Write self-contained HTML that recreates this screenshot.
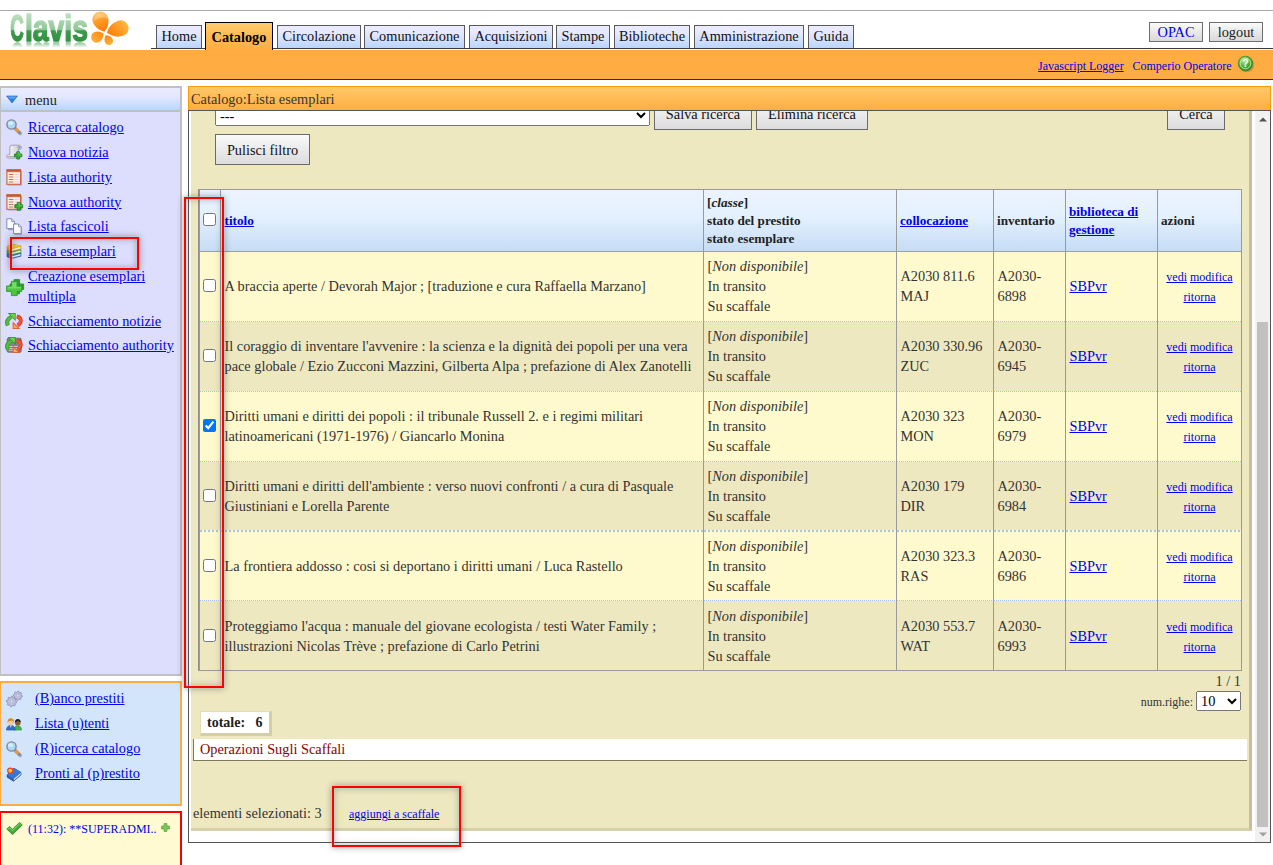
<!DOCTYPE html>
<html lang="it">
<head>
<meta charset="utf-8">
<title>Clavis - Catalogo: Lista esemplari</title>
<style>
html,body{margin:0;padding:0;background:#fff;}
body{width:1273px;height:865px;overflow:hidden;position:relative;font-family:"Liberation Serif","Times New Roman",serif;font-size:14.32px;color:#000;}
a{color:#0000ee;text-decoration:underline;}
.abs{position:absolute;}
#topline{left:0;top:10px;width:1273px;height:1px;background:#a9a9a9;}
#logo{left:8px;top:11px;width:126px;height:38px;}
#logotxt{left:8px;top:11px;width:90px;height:30.6px;overflow:hidden;-webkit-box-reflect:below 0px linear-gradient(transparent 82%,rgba(0,0,0,.62) 100%);}
#tabline{left:151px;top:48px;width:1122px;height:1px;background:#3c3c3c;}
.tab{position:absolute;top:25px;height:23px;box-sizing:border-box;border:1px solid #5a5a5a;border-bottom:none;background:linear-gradient(#ececff,#e4e8ff 35%,#b9d5ff);padding:0;text-align:center;line-height:21px;color:#111;white-space:nowrap;}
.tab.on{top:22px;height:28px;border:1px solid #000;border-bottom:none;background:linear-gradient(#ffca6a,#ffad42);font-weight:bold;line-height:28px;color:#000;}
.tbtn{position:absolute;top:22px;height:20px;box-sizing:border-box;border:1px solid #6e6e6e;background:linear-gradient(#fbfbfb,#e9e9e9 50%,#d9d9d9);text-align:center;line-height:18px;white-space:nowrap;}
#obar{left:0;top:50px;width:1273px;height:29px;background:#ffad42;border-bottom:1px solid #2e2e2e;}
#obar a,#obar span{position:absolute;font-size:12px;white-space:nowrap;line-height:14px;}
#menu{left:-1px;top:86px;width:183px;height:590px;box-sizing:border-box;border:2px solid #c0c0c0;background:#ddddfd;}
#menuhd{left:0;top:0;width:179px;height:22px;background:linear-gradient(#ebebff,#e4e8ff 40%,#b8d6ff);border-bottom:2px solid #c0c0c0;}
#menuhd span{position:absolute;left:24px;top:4px;line-height:17px;color:#222;}
.mi{position:absolute;left:0;width:179px;height:20px;line-height:19.8px;white-space:nowrap;}
.mi a{position:absolute;left:27px;top:0;}
.mi svg{position:absolute;left:5px;top:2px;width:16px;height:16px;overflow:visible;}
#menu .mi svg{top:1px;}
#menu .mi.h2 svg{top:12px;width:18px;height:17px;}
#quick{left:-1px;top:681px;width:183px;height:125px;box-sizing:border-box;border:2px solid #ffad42;background:#d2e5fb;}
#quick .mi a{left:34px;}
#notes{left:-1px;top:811px;width:183px;height:60px;box-sizing:border-box;border:2px solid #ff0000;background:#fffad2;}
#chd{left:188px;top:86px;width:1083px;height:24px;box-sizing:border-box;border:1px solid #ff9a0a;border-bottom:none;background:linear-gradient(#ffc968,#ffad42);color:#363636;line-height:24px;}
#frame{left:188px;top:110px;width:1083px;height:733px;box-sizing:border-box;border:1px solid #555;background:#fff;overflow:hidden;}
#page{left:2px;top:0;width:1061px;height:720px;box-sizing:border-box;background:#eee8c1;border-right:3px solid #c5c09b;border-bottom:3px solid #d6d1aa;}
#sbar{left:1066px;top:0;width:15px;height:731px;background:#f1f1f1;}
#thumb{left:2px;top:211px;width:11px;height:505px;background:#c1c1c1;}
.btn{position:absolute;box-sizing:border-box;border:1px solid #6b6b6b;background:linear-gradient(#fafafa,#ececec 45%,#dcdcdc);text-align:center;white-space:nowrap;color:#111;height:31px;line-height:30px;}
.hl{position:absolute;box-sizing:border-box;border:2px solid #ff0000;box-shadow:0 0 0 1px rgba(170,235,235,.28),inset 0 0 0 1px rgba(170,235,235,.28),0 0 7px rgba(0,0,0,.38),inset 0 0 7px rgba(0,0,0,.30);pointer-events:none;}
select{font-family:"Liberation Serif",serif;font-size:14.4px;margin:0;}
#sel1{left:24px;top:-6px;width:435px;height:21px;}
#sel2{left:1005px;top:580px;width:45px;height:20px;}
#grid{left:7px;top:78px;width:1044px;table-layout:fixed;border-collapse:separate;border-spacing:0;border:none;border-left:1px solid #8e8e8e;border-right:1px solid #9a9a9a;border-bottom:1px solid #9a9a9a;}
#grid th{height:62px;box-sizing:border-box;padding:0 3px;border:none;border-top:1px solid #9a9a9a;border-left:1px solid #9a9a9a;background:linear-gradient(#ecf4fe,#e3f0fe 45%,#c6dcf4);font-size:13.2px;line-height:18px;text-align:left;color:#222;font-weight:bold;}
#grid td{height:70px;box-sizing:border-box;padding:4px 3px 0 3.5px;border:none;border-left:1px solid #9a9a9a;line-height:19.8px;color:#333;vertical-align:middle;}
#grid tbody tr:first-child td{height:69px;padding-top:2px;border-top:1px solid #9e9e9e;}
#grid tr.odd td{background-color:#fffacd;}
#grid tr.even td{background-color:#eee8c1;}
#grid tr.r2 td,#grid tr.r4 td{background-image:repeating-linear-gradient(90deg,#a4c4ee 0 1px,#fffacd 1px 2px),linear-gradient(#fffacd,#fffacd);background-size:100% 1px,100% 1px;background-position:0 1px,0 0;background-repeat:no-repeat;}
#grid tr.r3 td{background-image:repeating-linear-gradient(90deg,#a4c4ee 0 1px,#fffacd 1px 2px),linear-gradient(#eee8c1,#eee8c1);background-size:100% 1px,100% 1px;background-position:0 1px,0 0;background-repeat:no-repeat;}
#grid tr.r5 td{background-image:repeating-linear-gradient(90deg,#a4c4ee 0 2px,#fffacd 2px 4px);background-size:100% 2px;background-position:0 0;background-repeat:no-repeat;}
#grid tr.r6 td{background-image:repeating-linear-gradient(90deg,#a4c4ee 0 1px,#fffacd 1px 2px);background-size:100% 1px;background-position:0 0;background-repeat:no-repeat;}
#grid .ck{padding:0;text-align:left;}
#grid th.t1{padding-left:3.5px;}
#grid td.ck{padding:2px 0 0 0;}
#grid tbody tr:first-child td.ck{padding:0;}
#grid input{margin:0 0 0 3px;width:13px;height:13px;vertical-align:middle;position:relative;top:-1px;}
#grid th input{top:-2px;}
#grid td.az{font-size:12px;text-align:center;padding:6px 2px 0 2px;}
#grid tbody tr:first-child td.az{padding-top:4px;}
#tot{left:9px;top:600px;width:72px;height:25px;box-sizing:border-box;background:#fff;border-style:solid;border-width:1px 3px 3px 1px;border-color:#e4dfb8 #d3cea6 #d3cea6 #e4dfb8;font-size:14px;line-height:22px;padding-left:6px;color:#222;white-space:nowrap;}
#ops{left:2px;top:628px;width:1054px;height:22px;box-sizing:border-box;background:#fff;border-left:1px solid #7d7a5e;border-bottom:1px solid #7d7a5e;padding-left:6px;line-height:20px;color:#8b0000;}
</style>
</head>
<body>
<div id="topline" class="abs"></div>

<!-- LOGO -->
<div id="logotxt" class="abs">
<svg viewBox="0 0 90 31" width="90" height="31" style="display:block">
<defs>
<linearGradient id="lg" gradientUnits="userSpaceOnUse" x1="0" y1="3" x2="0" y2="31"><stop offset="0" stop-color="#bfe0c2"/><stop offset=".56" stop-color="#8ec796"/><stop offset=".6" stop-color="#3f9a4c"/><stop offset="1" stop-color="#2f9040"/></linearGradient>
</defs>
<text y="30" font-family="Liberation Sans, Arial, sans-serif" font-weight="bold" font-size="36" fill="url(#lg)" stroke="url(#lg)" stroke-width="1.500" stroke-linejoin="round"><tspan x="2.200" textLength="13.500" lengthAdjust="spacingAndGlyphs">C</tspan><tspan x="17" textLength="63" lengthAdjust="spacingAndGlyphs">lavis</tspan></text>
</svg>
</div>
<svg id="logo" class="abs" viewBox="0 0 126 38">
<defs>
<linearGradient id="og1" x1=".3" y1="0" x2=".7" y2="1"><stop offset="0" stop-color="#ffc468"/><stop offset=".45" stop-color="#ff9a22"/><stop offset="1" stop-color="#ff7a05"/></linearGradient>
<linearGradient id="og2" x1="1" y1=".2" x2="0" y2=".8"><stop offset="0" stop-color="#ffbe4a"/><stop offset=".5" stop-color="#ff9a22"/><stop offset="1" stop-color="#ff7a05"/></linearGradient>
<linearGradient id="og3" x1="0" y1="1" x2="1" y2="0"><stop offset="0" stop-color="#ffb63e"/><stop offset="1" stop-color="#ff8410"/></linearGradient>
<linearGradient id="og4" x1=".6" y1="1" x2=".3" y2="0"><stop offset="0" stop-color="#ffb63e"/><stop offset="1" stop-color="#ff8410"/></linearGradient>
</defs>
<path d="M96.40 20.80Q102.33 13.65 99.79 6.08A7.9 7.9 0 1 0 84.81 11.12Q87.35 18.68 96.40 20.80Z" fill="url(#og1)"/>
<path d="M98.80 21.60Q106.39 27.51 114.95 24.84A7.9 7.9 0 1 0 110.25 9.76Q101.69 12.42 98.80 21.60Z" fill="url(#og2)"/>
<path d="M95.50 22.60Q90.33 19.09 86.06 21.32A5.5 5.5 0 1 0 91.14 31.08Q95.42 28.84 95.50 22.60Z" fill="url(#og3)"/>
<path d="M97.70 24.30Q95.36 28.46 97.34 31.93A4.1 4.1 0 1 0 104.46 27.87Q102.48 24.39 97.70 24.30Z" fill="url(#og4)"/>
<path d="M86.500 9.500Q86 3 92 1.800Q98.500 1.500 99.800 8Q93 4.500 86.500 9.500Z" fill="#fff" opacity=".28"/>
</svg>

<!-- TABS -->
<div id="tabline" class="abs"></div>
<div class="tab" style="left:156px;width:46px;">Home</div>
<div class="tab on" style="left:205px;width:68px;">Catalogo</div>
<div class="tab" style="left:277px;width:84px;">Circolazione</div>
<div class="tab" style="left:364px;width:101px;">Comunicazione</div>
<div class="tab" style="left:469px;width:84px;">Acquisizioni</div>
<div class="tab" style="left:556px;width:54px;">Stampe</div>
<div class="tab" style="left:614px;width:76px;">Biblioteche</div>
<div class="tab" style="left:694px;width:110px;">Amministrazione</div>
<div class="tab" style="left:808px;width:46px;">Guida</div>
<div class="tbtn" style="left:1149px;width:54px;color:#0000ee;">OPAC</div>
<div class="tbtn" style="left:1209px;width:54px;color:#222;">logout</div>

<!-- ORANGE BAR -->
<div id="obar" class="abs">
<a href="#" style="left:1038px;top:9px;color:#0000ee;">Javascript Logger</a>
<span style="left:1132.500px;top:9px;color:#0000ee;">Comperio Operatore</span>
<svg style="position:absolute;left:1237px;top:5px;width:18px;height:18px;" viewBox="0 0 18 18"><defs><radialGradient id="hg" cx=".4" cy=".3" r=".75"><stop offset="0" stop-color="#b6ec8e"/><stop offset=".55" stop-color="#48b030"/><stop offset="1" stop-color="#2a7f1e"/></radialGradient></defs><circle cx="9.600" cy="10" r="7.300" fill="#6b5a3a" opacity=".35"/><circle cx="8.500" cy="8.500" r="7.300" fill="url(#hg)" stroke="#3a8a2a" stroke-width=".8"/><circle cx="8.500" cy="8.500" r="5.300" fill="none" stroke="#e8f8d8" stroke-width=".9" opacity=".8"/><text x="8.500" y="12.300" text-anchor="middle" font-family="Liberation Sans, Arial, sans-serif" font-weight="bold" font-size="10.500" fill="#ffffff">?</text></svg>
</div>

<!-- LEFT MENU -->
<div id="menu" class="abs">
<div id="menuhd" class="abs"><svg viewBox="0 0 12 9" style="position:absolute;left:5px;top:7px;width:12px;height:9px;"><path d="M.6 1h10.800L6 8z" fill="#2f7fe0" stroke="#1f5fc0" stroke-width=".6" stroke-linejoin="round"/><path d="M1.800 1.600h8.400L8.800 3.400H3.200z" fill="#7fb4f4" opacity=".7"/></svg><span>menu</span></div>
<div class="mi " style="top:30px"><svg viewBox="0 0 16 16"><path d="M9.700 10.200l4.600 4.400" stroke="#7d7d88" stroke-width="3.400" stroke-linecap="round" opacity=".55"/><path d="M8.600 8.800l4.800 4.700" stroke="#8b8b93" stroke-width="3" stroke-linecap="round"/><path d="M9.200 9.300l3.200 3.100" stroke="#f29a32" stroke-width="2.800"/><path d="M8.300 8.300l1.300 1.300" stroke="#8f949e" stroke-width="2.400"/><circle cx="5.500" cy="5.500" r="4.600" fill="#a9d9f5" stroke="#80889a" stroke-width="1.400"/><ellipse cx="4.600" cy="4.200" rx="2.600" ry="1.900" fill="#d9f0fc" opacity=".85"/></svg><a href="#">Ricerca catalogo</a></div>
<div class="mi " style="top:55px"><svg viewBox="0 0 16 16"><defs><linearGradient id="sg" x1="0" y1="0" x2="1" y2="0"><stop offset="0" stop-color="#fdfdff"/><stop offset="1" stop-color="#c6c6d2"/></linearGradient></defs><path d="M5 1.200h7.600c1.600 0 2.700 1 2.700 2.300 0 1.200-.8 1.900-2 1.900h-.9v5.800c0 1.800-1.200 2.900-2.900 2.900H2.400C1.300 14.100.5 13.400.5 12.400c0-1 .7-1.700 1.700-1.700h1.600V3.300c0-1 .5-1.700 1.200-2.100z" fill="url(#sg)" stroke="#9a9aaa" stroke-width=".9"/><ellipse cx="13" cy="3.300" rx="1.300" ry="1.100" fill="#b4b4c4" stroke="#8e8e9e" stroke-width=".6"/><path d="M1.200 12.600h8.200" stroke="#a8a8b8" stroke-width="1.200"/><path d="M10.800 7.800h2.800v2.200h2.200v2.800h-2.200V15h-2.800v-2.200H8.600V10h2.200z" fill="#35b032" stroke="#1c7d1e" stroke-width=".9" stroke-linejoin="round"/><path d="M11.400 8.600h1.600v2.200h2v.8" fill="none" stroke="#7fe070" stroke-width=".7" opacity=".8"/></svg><a href="#">Nuova notizia</a></div>
<div class="mi " style="top:80px"><svg viewBox="0 0 16 16"><path d="M15.300 2v13.800H2.200" fill="none" stroke="#6e6e7e" stroke-width="1.200" opacity=".5"/><rect x=".9" y=".7" width="13.700" height="14.600" fill="#fbf1ea" stroke="#cc6846" stroke-width="1.200"/><rect x=".9" y=".7" width="13.700" height="2.200" fill="#c9532e"/><rect x="2" y="2.900" width="11.500" height="1" fill="#f3d2c2"/><path d="M2.800 5.500h4.600M2.800 8h4.600M2.800 10.500h4.600M2.800 13h4.600" stroke="#c77455" stroke-width="1.100"/><path d="M8.400 5.500h4.400M8.400 8h4.400M8.400 10.500h4.400M8.400 13h4.400" stroke="#ead0c3" stroke-width="1.100"/></svg><a href="#">Lista authority</a></div>
<div class="mi " style="top:104.5px"><svg viewBox="0 0 16 16"><path d="M15.300 2v13.800H2.200" fill="none" stroke="#6e6e7e" stroke-width="1.200" opacity=".5"/><rect x=".9" y=".7" width="13.700" height="14.600" fill="#fbf1ea" stroke="#cc6846" stroke-width="1.200"/><rect x=".9" y=".7" width="13.700" height="2.200" fill="#c9532e"/><rect x="2" y="2.900" width="11.500" height="1" fill="#f3d2c2"/><path d="M2.800 5.500h4.600M2.800 8h4.600M2.800 10.500h4.600M2.800 13h4.600" stroke="#c77455" stroke-width="1.100"/><path d="M8.400 5.500h4.400M8.400 8h4.400M8.400 10.500h4.400M8.400 13h4.400" stroke="#ead0c3" stroke-width="1.100"/><path d="M11.200 8.400h3v2.400h2.400v3h-2.400v2.400h-3v-2.400H8.800v-3h2.400z" fill="#35b032" stroke="#1c7d1e" stroke-width=".9" stroke-linejoin="round"/><path d="M11.900 9.200h1.600v2.400h2.200v.8" fill="none" stroke="#7fe070" stroke-width=".7" opacity=".8"/></svg><a href="#">Nuova authority</a></div>
<div class="mi " style="top:129px"><svg viewBox="0 0 16 16"><path d="M1.400 1.700h4.800l2.700 2.700v7h-7.500z" fill="#55607a" opacity=".45" transform="translate(.7 .8)"/><path d="M.8 .8h4.900l2.700 2.700v7.100H.8z" fill="#fcfdff" stroke="#7f8ba6" stroke-width="1"/><path d="M5.700.8v2.700h2.700" fill="#d9e1ef" stroke="#7f8ba6" stroke-width=".8"/><path d="M7.600 6.300h4.900l2.700 2.700v7.100H7.600z" fill="#55607a" opacity=".45" transform="translate(.7 .6)"/><path d="M7.600 6h4.900l2.700 2.700v7H7.600z" fill="#fcfdff" stroke="#7f8ba6" stroke-width="1"/><path d="M12.500 6v2.700h2.700" fill="#d9e1ef" stroke="#7f8ba6" stroke-width=".8"/></svg><a href="#">Lista fascicoli</a></div>
<div class="mi " style="top:154px"><svg viewBox="0 0 16 16"><path d="M1 10.500l5-2.500 9 2v3.200l-9.500 2.300L1 13.700z" fill="#3a74c4" stroke="#2a559a" stroke-width=".6"/><path d="M5.800 13.200l8.700-2.200v1.600l-8.700 2.200z" fill="#e9eef5"/><path d="M1 7l5-2.500 9 2v3.200l-9.500 2.300L1 10.200z" fill="#4fae5a" stroke="#2f8540" stroke-width=".6"/><path d="M5.800 9.700l8.700-2.200v1.600l-8.700 2.200z" fill="#eef3ec"/><path d="M1 3.500l5-2.500 9 2v3.200l-9.500 2.300L1 6.700z" fill="#e2b41e" stroke="#b88c12" stroke-width=".6"/><path d="M5.800 6.200l8.700-2.200v1.600l-8.700 2.200z" fill="#f6f1e2"/><path d="M1 3.500l5-2.500 9 2-9.500 2.300z" fill="#efc63a"/></svg><a href="#">Lista esemplari</a></div>
<div class="mi h2" style="top:179px"><svg viewBox="0 0 18 17"><path d="M8 .600h5.600v4.400h4v5.400h-4v4.400H8v-4.400H4V5h4z" fill="#2f9e2a" stroke="#238a22" stroke-width=".8" stroke-linejoin="round"/><path d="M5.400 2.400h5.800v4.600h4.600v5.400h-4.600v4.200H5.400v-4.200H.600V7h4.800z" fill="#4cc640" stroke="#2a9a28" stroke-width=".9" stroke-linejoin="round"/><path d="M6.300 3.300h4v4.600h4.600v1.500H1.500V7.900h4.800z" fill="#86e27a" opacity=".75"/></svg><a href="#">Creazione esemplari<br>multipla</a></div>
<div class="mi " style="top:224px"><svg viewBox="0 0 16 16"><path d="M1.800 12.600C.2 8.600 2 5.400 5.600 3.700" stroke="#2e8f26" stroke-width="4" fill="none"/><path d="M1.700 0h7.900v7.900z" fill="#2e8f26"/><path d="M1.800 12.400C.4 8.600 2.200 5.600 5.700 4" stroke="#4fbf3c" stroke-width="2.600" fill="none"/><path d="M3.400.800h5.400v5.400z" fill="#6fd456"/><path d="M10.800 3.300C15.800 4.600 16.200 9.400 11.600 12.400" stroke="#d8361a" stroke-width="3.800" fill="none"/><path d="M6.700 8.400v7.600h7.600z" fill="#e2511f"/><path d="M10.800 3.300C15.600 4.800 15.800 9.400 11.600 12.200" stroke="#f4562a" stroke-width="2.400" fill="none"/><path d="M7.500 10.400v4.800h4.800z" fill="#ffa25a"/></svg><a href="#">Schiacciamento notizie</a></div>
<div class="mi " style="top:248px"><svg viewBox="0 0 16 16"><rect x="1.200" y="1.200" width="14" height="14" rx="1" fill="#858585" stroke="#666" stroke-width=".8"/><path d="M3 9.500h10M3 11.500h10M3 13.300h10" stroke="#cfcfcf" stroke-width=".9"/><path d="M1.800 12.600C.2 8.600 2 5.400 5.600 3.700" stroke="#2e8f26" stroke-width="4" fill="none"/><path d="M1.700 0h7.900v7.900z" fill="#2e8f26"/><path d="M1.800 12.400C.4 8.600 2.200 5.600 5.700 4" stroke="#4fbf3c" stroke-width="2.600" fill="none"/><path d="M3.400.800h5.400v5.400z" fill="#6fd456"/><path d="M10.800 3.300C15.800 4.600 16.200 9.400 11.600 12.400" stroke="#d8361a" stroke-width="3.800" fill="none"/><path d="M6.700 8.400v7.600h7.600z" fill="#e2511f"/><path d="M10.800 3.300C15.600 4.800 15.800 9.400 11.600 12.200" stroke="#f4562a" stroke-width="2.400" fill="none"/><path d="M7.500 10.400v4.800h4.800z" fill="#ffa25a"/></svg><a href="#">Schiacciamento authority</a></div>
</div>
<div id="quick" class="abs">
<div class="mi" style="top:6px"><svg viewBox="0 0 16 16"><polygon points="16.40,4.80 16.31,5.70 14.94,6.10 14.63,6.69 15.05,8.05 14.36,8.62 13.10,7.94 12.46,8.14 11.80,9.40 10.90,9.31 10.50,7.94 9.91,7.63 8.55,8.05 7.98,7.36 8.66,6.10 8.46,5.46 7.20,4.80 7.29,3.90 8.66,3.50 8.97,2.91 8.55,1.55 9.24,0.98 10.50,1.66 11.14,1.46 11.80,0.20 12.70,0.29 13.10,1.66 13.69,1.97 15.05,1.55 15.62,2.24 14.94,3.50 15.14,4.14" fill="#c4c4e2" stroke="#8c8cba" stroke-width=".9" stroke-linejoin="round"/><circle cx="11.8" cy="4.8" r="1.38" fill="#d2e5fb" stroke="#9c9cc4" stroke-width=".6"/><polygon points="10.80,10.60 10.70,11.61 9.16,12.07 8.80,12.74 9.28,14.28 8.49,14.92 7.07,14.16 6.35,14.37 5.60,15.80 4.59,15.70 4.13,14.16 3.46,13.80 1.92,14.28 1.28,13.49 2.04,12.07 1.83,11.35 0.40,10.60 0.50,9.59 2.04,9.13 2.40,8.46 1.92,6.92 2.71,6.28 4.13,7.04 4.85,6.83 5.60,5.40 6.61,5.50 7.07,7.04 7.74,7.40 9.28,6.92 9.92,7.71 9.16,9.13 9.37,9.85" fill="#c4c4e2" stroke="#8c8cba" stroke-width=".9" stroke-linejoin="round"/><circle cx="5.6" cy="10.6" r="1.56" fill="#d2e5fb" stroke="#9c9cc4" stroke-width=".6"/></svg><a href="#">(B)anco prestiti</a></div>
<div class="mi" style="top:31.4px"><svg viewBox="0 0 17 14"><path d="M8.500 13.500c0-3 1.600-4.600 4-4.600s4 1.600 4 4.600z" fill="#3fb548" stroke="#2a8f35" stroke-width=".6"/><circle cx="12.500" cy="5.600" r="3" fill="#8a5a32"/><path d="M9.400 5.200c0-2.300 1.400-3.600 3.100-3.600s3.100 1.300 3.100 3.400c-1.400-.3-2-1-2.500-1.800-.8.900-2 1.600-3.700 2z" fill="#1e1a18"/><path d="M.5 13.500c0-3.300 1.800-5 4.600-5s4.600 1.700 4.600 5z" fill="#2f6fc8" stroke="#1f4f9a" stroke-width=".6"/><path d="M4.200 8.700l.9 2.400.9-2.400z" fill="#f3f3f3"/><circle cx="5.100" cy="5.300" r="3" fill="#f5c9a0"/><path d="M1.700 6.200C1.200 3 2.800 1 5.100 1s3.900 2 3.400 5.200c-.4-1.400-1-2.300-1.700-2.900-1.200.5-2.700.6-3.700.4-.6.600-1.100 1.400-1.400 2.500z" fill="#d98a1c"/></svg><a href="#">Lista (u)tenti</a></div>
<div class="mi" style="top:56.3px"><svg viewBox="0 0 16 16"><path d="M9.700 10.200l4.600 4.400" stroke="#7d7d88" stroke-width="3.400" stroke-linecap="round" opacity=".55"/><path d="M8.600 8.800l4.800 4.700" stroke="#8b8b93" stroke-width="3" stroke-linecap="round"/><path d="M9.200 9.300l3.200 3.100" stroke="#f29a32" stroke-width="2.800"/><path d="M8.300 8.300l1.300 1.300" stroke="#8f949e" stroke-width="2.400"/><circle cx="5.500" cy="5.500" r="4.600" fill="#a9d9f5" stroke="#80889a" stroke-width="1.400"/><ellipse cx="4.600" cy="4.200" rx="2.600" ry="1.900" fill="#d9f0fc" opacity=".85"/></svg><a href="#">(R)icerca catalogo</a></div>
<div class="mi" style="top:81.2px"><svg viewBox="0 0 16 16"><path d="M1.200 8.800L8 2.200l7 4.200v2.400l-7.400 6.400-6.400-4z" fill="#2a62c4" stroke="#1b4290" stroke-width=".7" stroke-linejoin="round"/><path d="M7.800 12.700l6.800-5.900v1.700l-6.800 5.900z" fill="#e8ecf4"/><path d="M1.200 8.800L8 2.200l7 4.200-7.300 6.400z" fill="#3a78d8"/><circle cx="4.300" cy="4.600" r="3.200" fill="#e8442a"/><circle cx="4.300" cy="4.600" r="1.900" fill="#ffc92a"/></svg><a href="#">Pronti al (p)restito</a></div>
</div>
<div id="notes" class="abs">
<svg style="position:absolute;left:5px;top:9px;width:17px;height:13px;" viewBox="0 0 17 13"><path d="M1.400 7.800l2.700-2.500 2.600 2.700L14 1.200l2.400 2.300L6.800 12.900z" fill="#3c5f2c" opacity=".45"/><path d="M.800 7l2.700-2.600 2.900 2.900L13.600.400l2.600 2.400L6.400 12.400z" fill="#3fae36" stroke="#2c8c28" stroke-width=".8" stroke-linejoin="round"/><path d="M2.200 7l1.300-1.200 2.900 2.900 7.200-6.900 1.100 1" fill="none" stroke="#86d874" stroke-width="1"/></svg>
<span style="position:absolute;left:27px;top:9px;font-size:12px;line-height:14px;color:#0000ee;white-space:nowrap;">(11:32): **SUPERADMI..</span>
<svg style="position:absolute;left:159.500px;top:9.500px;width:9px;height:9px;" viewBox="0 0 10 10"><path d="M3.400.6h3.200v2.800h2.800v3.200H6.600v2.800H3.400V6.600H.6V3.400h2.800z" fill="#7cc65a" stroke="#5aa640" stroke-width=".8" stroke-linejoin="round"/></svg>
</div>

<!-- CONTENT -->
<div id="chd" class="abs"><span style="padding-left:2px;">Catalogo:Lista esemplari</span></div>
<div id="frame" class="abs">
<div id="page" class="abs">
<select id="sel1" class="abs"><option>---</option></select>
<div class="btn" style="left:463px;top:-12px;width:98px;line-height:28px;">Salva ricerca</div>
<div class="btn" style="left:565px;top:-12px;width:112px;line-height:28px;">Elimina ricerca</div>
<div class="btn" style="left:976px;top:-12px;width:58px;line-height:28px;">Cerca</div>
<div class="btn" style="left:24px;top:23px;width:95px;">Pulisci filtro</div>

<table id="grid" class="abs" cellspacing="0">
<colgroup><col style="width:21px"><col style="width:483px"><col style="width:193px"><col style="width:97px"><col style="width:72px"><col style="width:92px"><col style="width:84px"></colgroup>
<thead><tr><th class="ck"><input type="checkbox"></th><th class="t1"><a href="#">titolo</a></th><th>[<i>classe</i>]<br>stato del prestito<br>stato esemplare</th><th><a href="#">collocazione</a></th><th>inventario</th><th><a href="#">biblioteca di gestione</a></th><th>azioni</th></tr></thead>
<tbody>
<tr class="odd r1"><td class="ck"><input type="checkbox"></td><td class="ti">A braccia aperte / Devorah Major ; [traduzione e cura Raffaella Marzano]</td><td class="st">[<i>Non disponibile</i>]<br>In transito<br>Su scaffale</td><td class="co">A2030 811.6<br>MAJ</td><td class="in">A2030-<br>6898</td><td class="bi"><a href="#">SBPvr</a></td><td class="az"><a href="#">vedi</a> <a href="#">modifica</a><br><a href="#">ritorna</a></td></tr>
<tr class="even r2"><td class="ck"><input type="checkbox"></td><td class="ti">Il coraggio di inventare l'avvenire : la scienza e la dignità dei popoli per una vera pace globale / Ezio Zucconi Mazzini, Gilberta Alpa ; prefazione di Alex Zanotelli</td><td class="st">[<i>Non disponibile</i>]<br>In transito<br>Su scaffale</td><td class="co">A2030 330.96<br>ZUC</td><td class="in">A2030-<br>6945</td><td class="bi"><a href="#">SBPvr</a></td><td class="az"><a href="#">vedi</a> <a href="#">modifica</a><br><a href="#">ritorna</a></td></tr>
<tr class="odd r3"><td class="ck"><input type="checkbox" checked></td><td class="ti">Diritti umani e diritti dei popoli : il tribunale Russell 2. e i regimi militari latinoamericani (1971-1976) / Giancarlo Monina</td><td class="st">[<i>Non disponibile</i>]<br>In transito<br>Su scaffale</td><td class="co">A2030 323<br>MON</td><td class="in">A2030-<br>6979</td><td class="bi"><a href="#">SBPvr</a></td><td class="az"><a href="#">vedi</a> <a href="#">modifica</a><br><a href="#">ritorna</a></td></tr>
<tr class="even r4"><td class="ck"><input type="checkbox"></td><td class="ti">Diritti umani e diritti dell'ambiente : verso nuovi confronti / a cura di Pasquale Giustiniani e Lorella Parente</td><td class="st">[<i>Non disponibile</i>]<br>In transito<br>Su scaffale</td><td class="co">A2030 179<br>DIR</td><td class="in">A2030-<br>6984</td><td class="bi"><a href="#">SBPvr</a></td><td class="az"><a href="#">vedi</a> <a href="#">modifica</a><br><a href="#">ritorna</a></td></tr>
<tr class="odd r5"><td class="ck"><input type="checkbox"></td><td class="ti">La frontiera addosso : cosi si deportano i diritti umani / Luca Rastello</td><td class="st">[<i>Non disponibile</i>]<br>In transito<br>Su scaffale</td><td class="co">A2030 323.3<br>RAS</td><td class="in">A2030-<br>6986</td><td class="bi"><a href="#">SBPvr</a></td><td class="az"><a href="#">vedi</a> <a href="#">modifica</a><br><a href="#">ritorna</a></td></tr>
<tr class="even r6"><td class="ck"><input type="checkbox"></td><td class="ti">Proteggiamo l'acqua : manuale del giovane ecologista / testi Water Family ; illustrazioni Nicolas Trève ; prefazione di Carlo Petrini</td><td class="st">[<i>Non disponibile</i>]<br>In transito<br>Su scaffale</td><td class="co">A2030 553.7<br>WAT</td><td class="in">A2030-<br>6993</td><td class="bi"><a href="#">SBPvr</a></td><td class="az"><a href="#">vedi</a> <a href="#">modifica</a><br><a href="#">ritorna</a></td></tr>
</tbody>
</table>

<div class="abs" style="left:0;top:562px;width:1050px;text-align:right;line-height:17px;color:#333;">1 / 1</div>
<div class="abs" style="left:0;top:581px;width:1002px;text-align:right;font-size:12px;line-height:20px;color:#333;">num.righe:</div>
<select id="sel2" class="abs"><option>10</option></select>

<div id="tot" class="abs"><b>totale:</b>&nbsp;&nbsp; <b>6</b></div>
<div id="ops" class="abs">Operazioni Sugli Scaffali</div>
<div class="abs" style="left:2px;top:692px;line-height:20px;color:#333;white-space:nowrap;">elementi selezionati: 3</div>
<a href="#" class="abs" style="left:158px;top:696px;font-size:12px;line-height:14px;white-space:nowrap;">aggiungi a scaffale</a>
</div>
<div id="sbar" class="abs"><div id="thumb" class="abs"></div>
<svg class="abs" style="left:4px;top:6px;width:8px;height:5px" viewBox="0 0 8 5"><path d="M0 4.500L4 .5l4 4z" fill="#505050"/></svg>
<svg class="abs" style="left:3.700px;top:721px;width:8px;height:5px" viewBox="0 0 8 5"><path d="M0 .5L4 4.500l4-4z" fill="#a0a0a0"/></svg>
</div>
</div>

<!-- highlight boxes -->
<div class="hl" style="left:10px;top:237px;width:129px;height:33px;"></div>
<div class="hl" style="left:184px;top:197px;width:40px;height:491px;"></div>
<div class="hl" style="left:332px;top:786px;width:129px;height:61px;"></div>

</body>
</html>
